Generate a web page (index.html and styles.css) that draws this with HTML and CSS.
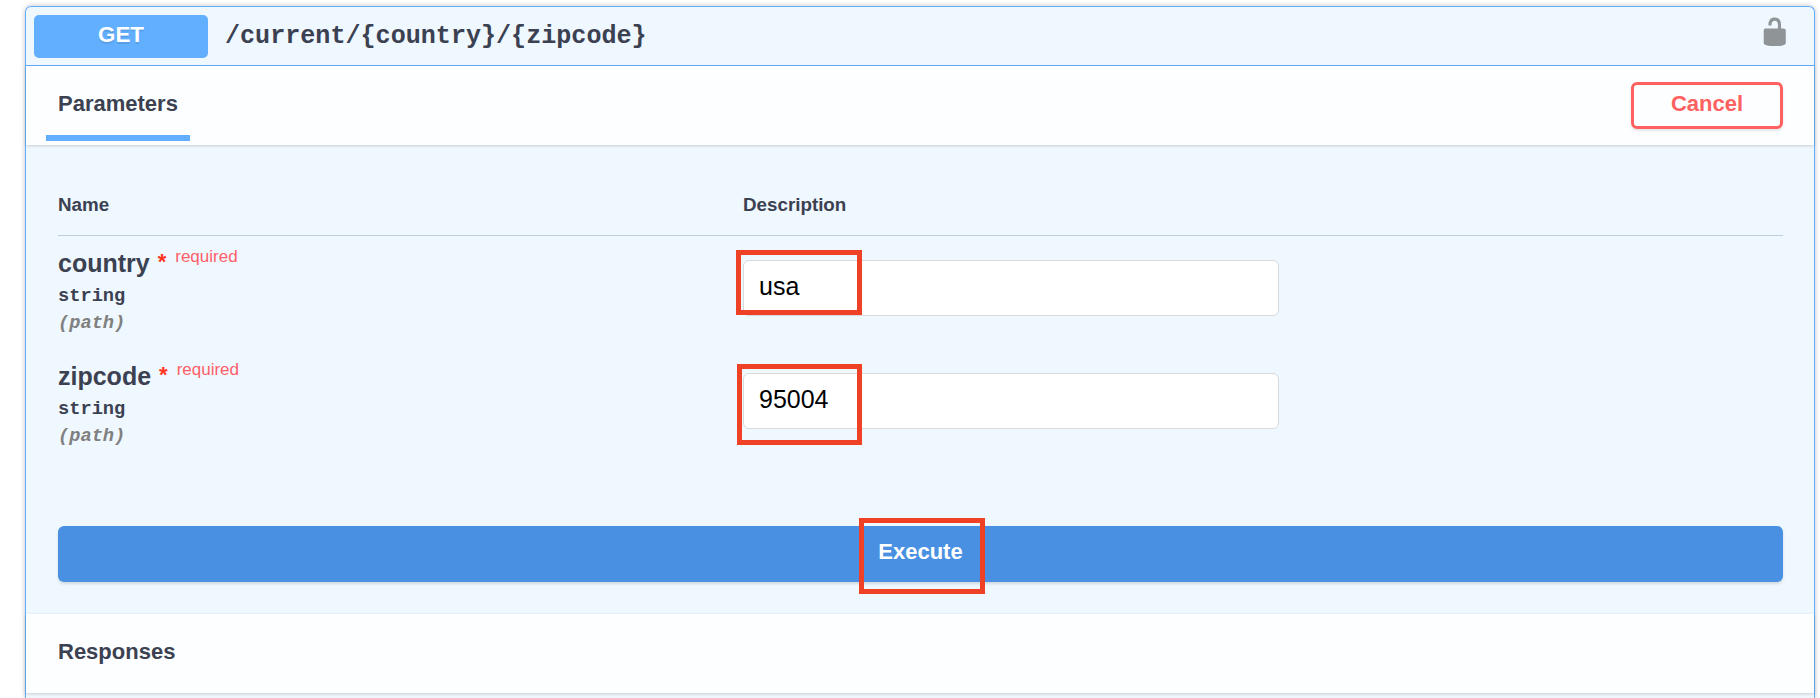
FILE: index.html
```html
<!DOCTYPE html>
<html lang="en">
<head>
<meta charset="utf-8">
<title>GET /current/{country}/{zipcode}</title>
<link rel="stylesheet" href="styles.css">
</head>
<body>
<main class="opblock">
  <header class="summary">
    <span class="method">GET</span>
    <span class="path">/current/{country}/{zipcode}</span>
    <svg class="lock" viewBox="0 0 20 20" aria-hidden="true"><path d="M15.8 8H14V5.6C14 2.703 12.665 1 10 1 7.334 1 6 2.703 6 5.6V6h2v-.801C8 3.754 8.797 3 10 3c1.203 0 2 .754 2 2.199V8H4c-.553 0-1 .646-1 1.199V17c0 .549.428 1.139.951 1.307l1.197.387C5.672 18.861 6.55 19 7.1 19h5.8c.549 0 1.428-.139 1.951-.307l1.196-.387c.524-.167.953-.757.953-1.306V9.199C17 8.646 16.352 8 15.8 8z"/></svg>
  </header>
  <div class="section-head">
    <h4 class="tab">Parameters</h4>
    <button class="cancel">Cancel</button>
  </div>
  <div class="params">
    <div class="row head"><span>Name</span><span>Description</span></div>
    <div class="row">
      <div class="info">
        <div class="name">country<span class="star">*</span><span class="required">required</span></div>
        <div class="type">string</div>
        <div class="in">(path)</div>
      </div>
      <div class="field"><input class="input" type="text" value="usa"><i class="mark mark-country"></i></div>
    </div>
    <div class="row">
      <div class="info">
        <div class="name">zipcode<span class="star">*</span><span class="required">required</span></div>
        <div class="type">string</div>
        <div class="in">(path)</div>
      </div>
      <div class="field"><input class="input" type="text" value="95004"><i class="mark mark-zip"></i></div>
    </div>
  </div>
  <div class="execute-wrap">
    <button class="execute">Execute<i class="mark mark-execute"></i></button>
  </div>
  <div class="section-head">
    <h4 class="title">Responses</h4>
  </div>
</main>
</body>
</html>
```
FILE: styles.css
```css
* { box-sizing: border-box; }
html, body { margin: 0; height: 698px; background: #fff; }
body {
  padding: 6px 5px 0 25px;
  font-family: "Liberation Sans", Arial, sans-serif;
  color: #3b4151;
}
button, input { font-family: inherit; margin: 0; }
.opblock {
  height: 692px;
  border: 1px solid #61affe;
  border-bottom: 0;
  border-radius: 6px 6px 0 0;
  background: #eff7ff;
  box-shadow: 0 0 5px rgba(0, 0, 0, .25);
}
.summary {
  display: flex;
  align-items: center;
  height: 59px;
  padding: 1px 24px 0 8px;
  border-bottom: 1px solid #61affe;
}
.method {
  width: 174px;
  height: 43px;
  border-radius: 5px;
  background: #61affe;
  color: #fff;
  font-size: 22.3px;
  font-weight: 700;
  line-height: 39px;
  text-align: center;
  text-shadow: 0 2px 0 rgba(0, 0, 0, .1);
}
.path {
  flex: 1;
  padding-left: 17px;
  font: 700 25.1px/30px "Liberation Mono", "Courier New", monospace;
}
.lock {
  width: 31.5px;
  height: 31.5px;
  margin-bottom: 9px;
  fill: #8f9496;
}
.section-head {
  display: flex;
  align-items: center;
  justify-content: space-between;
  height: 79px;
  padding: 0 31px 0 20px;
  background: rgba(255, 255, 255, .8);
  box-shadow: 0 1px 3px rgba(0, 0, 0, .17);
}
h4 { margin: 0; font-size: 22px; font-weight: 700; }
.tab {
  align-self: flex-end;
  width: 144px;
  height: 54px;
  margin-bottom: 4px;
  padding-left: 12px;
  border-bottom: 6px solid #61affe;
  line-height: 34px;
}
.title { padding: 0 0 4px 12px; line-height: 26px; }
.cancel {
  width: 152px;
  height: 47px;
  padding: 0 0 3px;
  border: 3px solid #ff6060;
  border-radius: 6px;
  background: transparent;
  box-shadow: 0 2px 3px rgba(0, 0, 0, .1);
  color: #ff6060;
  font-size: 22px;
  font-weight: 700;
}
.params { padding: 44px 31px 0 32px; }
.row {
  display: grid;
  grid-template-columns: 685px 1fr;
  height: 113px;
}
.head {
  height: 47px;
  border-bottom: 1px solid #c4cedb;
  font-size: 18.8px;
  font-weight: 700;
  line-height: 31px;
}
.info { padding-top: 12px; }
.name {
  display: flex;
  height: 30px;
  font-size: 25px;
  font-weight: 700;
  line-height: 30px;
}
.star {
  margin-left: 8px;
  color: #ff3420;
  font-size: 22px;
  line-height: 27px;
}
.required {
  margin-left: 9px;
  color: #ff6068;
  font-size: 17px;
  font-weight: 400;
  line-height: 18px;
}
.type, .in {
  margin-top: 6px;
  font: 700 18.7px/24px "Liberation Mono", "Courier New", monospace;
}
.in { margin-top: 3px; color: #808080; font-style: italic; }
.field { position: relative; padding-top: 24px; }
.input {
  display: block;
  width: 536px;
  height: 56px;
  padding: 0 15px 3px;
  border: 1px solid #d9d9d9;
  border-radius: 6px;
  background: #fff;
  color: #000;
  font-size: 25px;
}
.execute-wrap { height: 152px; padding: 64px 31px 0 32px; }
.execute {
  position: relative;
  display: block;
  width: 100%;
  height: 56px;
  padding: 0 0 4px;
  border: 0;
  border-radius: 6px;
  background: #4990e2;
  box-shadow: 0 2px 3px rgba(0, 0, 0, .12);
  color: #fff;
  font-size: 22px;
  font-weight: 700;
}
/* Highlight frames drawn over the controls */
.mark { position: absolute; border: 5px solid #ee4126; pointer-events: none; }
.mark-country { left: -7.5px; top: 14px; width: 126px; height: 65px; }
.mark-zip { left: -6.5px; top: 15px; width: 125px; height: 81px; }
.mark-execute { left: 800.5px; top: -8px; width: 126px; height: 76px; }
```
